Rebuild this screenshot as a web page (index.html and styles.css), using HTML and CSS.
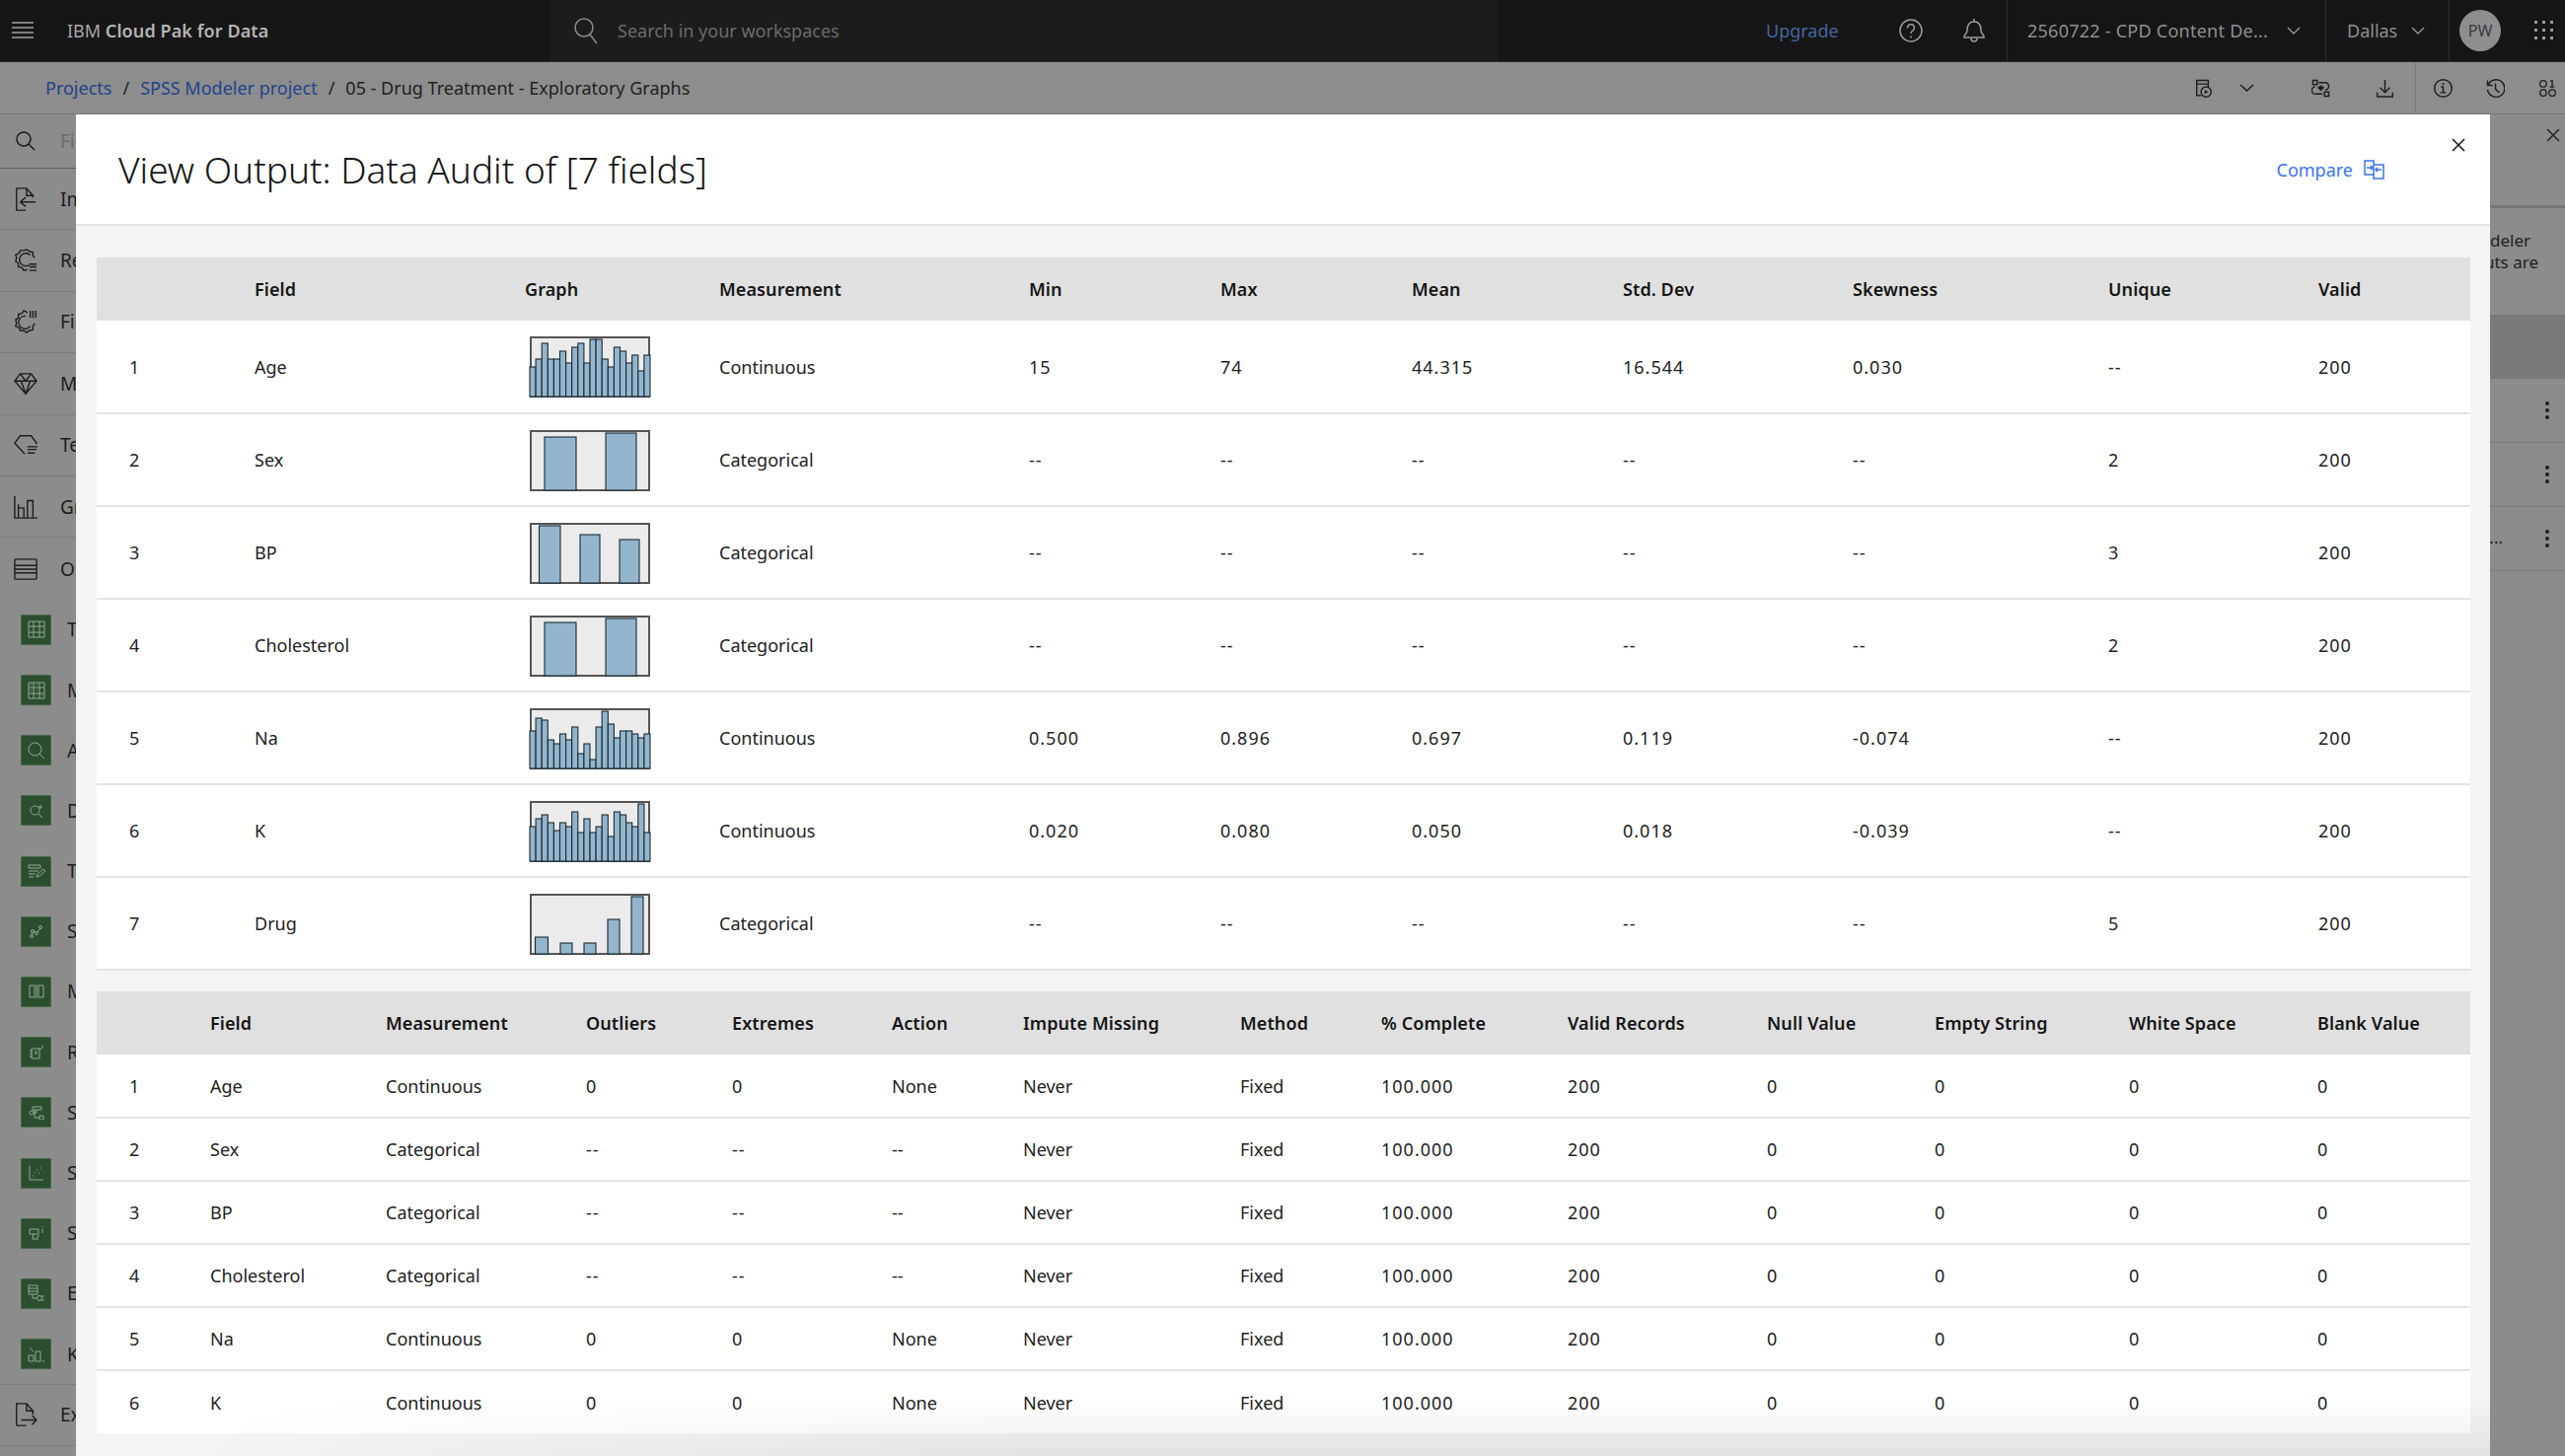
FILE: index.html
```html
<!DOCTYPE html>
<html lang="en">

<head>
    <meta charset="UTF-8">
    <title>View Output: Data Audit</title>
    <link rel="stylesheet" href="styles.css">
</head>

<body>
    <header class="topbar">
        <svg class="hamburger" width="22" height="18" viewBox="0 0 22 18"><path d="M0 1h22M0 6h22M0 11h22M0 16h22"/></svg>
        <div class="brand">IBM <b>Cloud Pak for Data</b></div>
        <div class="search">
            <svg width="24" height="28" viewBox="0 0 24 28"><circle cx="10" cy="11" r="9"/><path d="M16 18l7 9"/></svg>
            <span>Search in your workspaces</span>
        </div>
        <a class="upgrade">Upgrade</a>
        <svg class="tb-help" width="24" height="24" viewBox="0 0 24 24"><circle cx="12" cy="12" r="11"/><path d="M8.500 9.500c0-5 7-5 7 0 0 2.500-3.500 2.500-3.500 5.500"/><circle class="solid" cx="12" cy="18.500" r="1"/></svg>
        <svg class="tb-bell" width="24" height="26" viewBox="0 0 24 26"><path d="M12 1v3M5 13c0-5 2-9 7-9s7 4 7 9c0 3 3 4 3 6v1H2v-1c0-2 3-3 3-6zM9 21a3 3 0 0 0 6 0"/></svg>
        <div class="tb-menu account">2560722 - CPD Content De...
            <svg width="14" height="8" viewBox="0 0 14 8"><path d="M1 1l6 6 6-6"/></svg>
        </div>
        <div class="tb-menu region">Dallas
            <svg width="14" height="8" viewBox="0 0 14 8"><path d="M1 1l6 6 6-6"/></svg>
        </div>
        <div class="tb-user">
            <div class="avatar">PW</div>
            <svg class="apps" width="20" height="20" viewBox="0 0 20 20"><path d="M1 0h3v3H1zM9 0h3v3H9zM17 0h3v3h-3zM1 8h3v3H1zM9 8h3v3H9zM17 8h3v3h-3zM1 16h3v3H1zM9 16h3v3H9zM17 16h3v3h-3z"/></svg>
        </div>
    </header>

    <div class="crumbbar">
        <nav class="crumbs">
            <a>Projects</a><i>/</i><a>SPSS Modeler project</a><i>/</i><span>05 - Drug Treatment - Exploratory Graphs</span>
        </nav>
        <div class="tools">
            <svg class="t-run" width="18" height="19" viewBox="0 0 24 26"><path d="M8 23H2V2h16v9M2 7h16"/><circle cx="15" cy="18" r="7"/><path class="solid" d="M13 15l5 3-5 3z"/></svg>
            <svg class="t-chev" width="15" height="8" viewBox="0 0 15 8"><path d="M1 1l6.500 6L14 1"/></svg>
            <svg class="t-flow" width="19" height="19" viewBox="0 0 26 26"><path d="M2 2h6v6H2zM18 18h6v6h-6zM10 5h9a5 5 0 0 1 0 10M15 21H6a5 5 0 0 1-1-10"/><path class="solid" d="M8 12l5-3 5 3-5 5z"/></svg>
            <svg class="t-down" width="17" height="19" viewBox="0 0 24 26"><path d="M12 1v18M5 12l7 7 7-7M1 19v6h22v-6"/></svg>
            <span class="tool-sep"></span>
            <svg class="t-info" width="19" height="19" viewBox="0 0 26 26"><circle cx="13" cy="13" r="12"/><path d="M10 11h3v8M9 19h8"/><circle class="solid" cx="13" cy="7" r="1.500"/></svg>
            <svg class="t-hist" width="19" height="19" viewBox="0 0 26 26"><path d="M2 2v7h7M3 8a12 12 0 1 1-1 7M13 6v8l5 5"/></svg>
            <svg class="t-bits" width="19" height="17" viewBox="0 0 26 26"><circle cx="6" cy="6" r="5"/><circle cx="6" cy="20" r="5"/><circle cx="20" cy="20" r="5"/><path d="M17 2l3-1v10M16 11h7"/></svg>
        </div>
    </div>

    <div class="workspace">
        <aside class="palette">
            <div class="palette-search">
                <svg width="20" height="20" viewBox="0 0 20 20"><circle cx="8" cy="8" r="7"/><path d="M13 13l6 6"/></svg>
                <span>Find nodes</span>
            </div>
            <div class="pal-item">
                <svg viewBox="0 0 26 26"><path d="M13 25H3V1h11l7 8h-7V1M21 9v2M7 16h17M7 16l6-5M7 16l6 5"/></svg>
                <span>Import</span>
            </div>
            <div class="pal-item">
                <svg viewBox="0 0 26 26"><path d="M15 23l-4 1-2-3-4-1v-4l-3-2 1-4-1-3 4-2 1-3h4l3-1 3 2 4 1v4l2 2M17 18a7 7 0 1 1 1-11"/><path d="M17 17h8M17 20h8M17 24h8"/></svg>
                <span>Record Operations</span>
            </div>
            <div class="pal-item">
                <svg viewBox="0 0 26 26"><path d="M15 3l-4-2-2 3-4 1v4L2 11l1 4-1 3 4 2 1 3h4l3 2 3-2 4-1v-4l2-3M13 7a7 7 0 1 0 5 11M18 1v8M21 1v8M24 1v8"/></svg>
                <span>Field Operations</span>
            </div>
            <div class="pal-item">
                <svg viewBox="0 0 26 24"><path d="M7 1h12l6 8-12 14L1 9zM1 9h24M7 1l6 8 6-8M8 9l5 14 5-14"/></svg>
                <span>Modeling</span>
            </div>
            <div class="pal-item">
                <svg viewBox="0 0 26 22"><path d="M12 21L1 9l6-8h12l6 8-1 1"/><path d="M15 13h11M15 16h10M15 20h8"/></svg>
                <span>Text Analytics</span>
            </div>
            <div class="pal-item">
                <svg viewBox="0 0 26 26"><path d="M1 1v24h25M5 25V10M5 25h6V14h-6M15 25V6h6v19"/></svg>
                <span>Graphs</span>
            </div>
            <div class="pal-item pal-open">
                <svg viewBox="0 0 26 24"><path d="M2 1h22a1 1 0 0 1 1 1v20a1 1 0 0 1-1 1H2a1 1 0 0 1-1-1V2a1 1 0 0 1 1-1zM1 8h24M1 12h24M1 16h24"/></svg>
                <span>Outputs</span>
            </div>
            <div class="pal-sub"><b><svg width="18" height="18" viewBox="0 0 18 18"><path d="M1 1h16v16H1zM1 6h16M1 12h16M6 1v16M12 1v16"/></svg></b><span>Table</span></div>
            <div class="pal-sub"><b><svg width="18" height="18" viewBox="0 0 18 18"><path d="M1 1h16v16H1zM1 6h16M1 12h16M6 1v16M12 1v16M3 3h1M9 3h1M3 9h1M9 9h1M14 14h1"/></svg></b><span>Matrix</span></div>
            <div class="pal-sub"><b><svg width="18" height="18" viewBox="0 0 18 18"><circle cx="7.500" cy="7.500" r="6.500"/><path d="M12 12l5 5"/></svg></b><span>Analysis</span></div>
            <div class="pal-sub"><b><svg width="14" height="14" viewBox="0 0 14 14"><circle cx="5.500" cy="6.500" r="4.500"/><path d="M9 10l4 4M11 1v4M9 3h4"/></svg></b><span>Data Audit</span></div>
            <div class="pal-sub"><b><svg width="18" height="14" viewBox="0 0 18 14"><path d="M1 1h12v3H1zM1 7h10M1 10h7M1 13h5M9 13l1-3 6-5 2 2-6 5z"/></svg></b><span>Transform</span></div>
            <div class="pal-sub"><b><svg width="14" height="14" viewBox="0 0 14 14"><circle cx="2" cy="12" r="1.500"/><circle cx="3" cy="7" r="1.500"/><circle cx="7" cy="9" r="1.500"/><circle cx="11" cy="3" r="1.500"/><path d="M3 8l-1 3M4 7l2 1M8 8l3-4"/></svg></b><span>Statistics</span></div>
            <div class="pal-sub"><b><svg width="16" height="14" viewBox="0 0 16 14"><path d="M1 1h5v12H1zM10 1h5v12h-5zM8 0v14"/></svg></b><span>Means</span></div>
            <div class="pal-sub"><b><svg width="14" height="14" viewBox="0 0 14 14"><path d="M2 3h8v10H2zM0 5h3M0 8h3M0 11h3M5 6h3M5 8h3M9 3l2 1 3-4"/></svg></b><span>Report</span></div>
            <div class="pal-sub"><b><svg width="16" height="14" viewBox="0 0 16 14"><path d="M4 1h9v3H4zM6 4v8h5M8 4v3"/><circle cx="3" cy="7" r="2"/><path d="M5 7h3M11 10h4v4h-4z"/></svg></b><span>Set Globals</span></div>
            <div class="pal-sub"><b><svg width="16" height="16" viewBox="0 0 16 16"><path d="M1 1v14h14M6 8h1M10 8h1M8 5h1M12 3h1M4 11h1"/></svg></b><span>Sim Fit</span></div>
            <div class="pal-sub"><b><svg width="16" height="14" viewBox="0 0 16 14"><path d="M1 3h9v5H1zM5 8l-1 5h6M8 12l3-3M14 0v1M14 3v4"/></svg></b><span>Sim Eval</span></div>
            <div class="pal-sub"><b><svg width="18" height="18" viewBox="0 0 18 18"><path d="M1 1h9v9H1zM1 4h9M1 7h9M5 10v4h5"/><circle cx="12" cy="14" r="2.500"/><path d="M14 12h3M14 16h3"/></svg></b><span>Extension</span></div>
            <div class="pal-sub"><b><svg width="18" height="16" viewBox="0 0 18 16"><path d="M2 1l4 4M1 9h5v6H1zM8 5h5v10H8zM15 15h2"/></svg></b><span>KDE</span></div>
            <div class="pal-item pal-export">
                <svg viewBox="0 0 26 26"><path d="M3 25V1h11l7 8h-7V1M21 9v4M14 25H3M8 19h17M25 19l-5-5M25 19l-5 5"/></svg>
                <span>Export</span>
            </div>
        </aside>

        <main class="canvas"></main>

        <aside class="side-panel">
            <div class="side-head">
                <svg width="14" height="14" viewBox="0 0 14 14"><path d="M1 1l12 12M13 1L1 13"/></svg>
            </div>
            <div class="side-note">
                <p class="note-a">SPSS Modeler</p>
                <p class="note-b">node outputs are</p>
            </div>
            <div class="side-band"></div>
            <div class="side-row"><em></em></div>
            <div class="side-row"><em></em></div>
            <div class="side-row"><span>Drug...</span><em></em></div>
        </aside>
    </div>

    <section class="modal">
        <div class="modal-head">
            <h2>View Output: Data Audit of [7 fields]</h2>
            <a class="compare">Compare
                <svg width="21" height="20" viewBox="0 0 21 20"><path d="M10 15H1V1h9v18h10V5H10M3 8h6M7 6l2 2-2 2M18 10h-6M14 8l-2 2 2 2"/></svg>
            </a>
            <svg class="modal-close" width="14" height="14" viewBox="0 0 14 14"><path d="M1 1l12 12M13 1L1 13"/></svg>
        </div>
        <div class="modal-body">
            <table class="audit stats">
                <colgroup><col><col><col><col><col><col><col><col><col><col><col></colgroup>
                <thead>
                    <tr><th></th><th>Field</th><th>Graph</th><th>Measurement</th><th>Min</th><th>Max</th><th>Mean</th><th>Std. Dev</th><th>Skewness</th><th>Unique</th><th>Valid</th></tr>
                </thead>
                <tbody>
                    <tr><td>1</td><td>Age</td><td>
                        <svg class="graph" width="122" height="61" viewBox="0 0 122 61"><rect class="frame" x="1" y="1" width="120" height="60"/>
                            <rect x="0" y="31" width="6.100" height="30"/><rect x="6.100" y="23" width="6.100" height="38"/><rect x="12.200" y="7" width="6.100" height="54"/><rect x="18.300" y="23" width="6.100" height="38"/><rect x="24.400" y="23" width="6.100" height="38"/><rect x="30.500" y="15" width="6.100" height="46"/><rect x="36.600" y="27" width="6.100" height="34"/><rect x="42.700" y="11" width="6.100" height="50"/><rect x="48.800" y="7" width="6.100" height="54"/><rect x="54.900" y="27" width="6.100" height="34"/><rect x="61" y="3" width="6.100" height="58"/><rect x="67.100" y="3" width="6.100" height="58"/><rect x="73.200" y="23" width="6.100" height="38"/><rect x="79.300" y="31" width="6.100" height="30"/><rect x="85.400" y="11" width="6.100" height="50"/><rect x="91.500" y="15" width="6.100" height="46"/><rect x="97.600" y="27" width="6.100" height="34"/><rect x="103.700" y="19" width="6.100" height="42"/><rect x="109.800" y="35" width="6.100" height="26"/><rect x="115.900" y="19" width="6.100" height="42"/>
                        </svg></td><td>Continuous</td><td>15</td><td>74</td><td>44.315</td><td>16.544</td><td>0.030</td><td>--</td><td>200</td></tr>
                    <tr><td>2</td><td>Sex</td><td>
                        <svg class="graph" width="122" height="61" viewBox="0 0 122 61"><rect class="frame" x="1" y="1" width="120" height="60"/>
                            <rect x="15" y="7" width="32" height="54"/><rect x="77" y="3" width="31" height="58"/>
                        </svg></td><td>Categorical</td><td>--</td><td>--</td><td>--</td><td>--</td><td>--</td><td>2</td><td>200</td></tr>
                    <tr><td>3</td><td>BP</td><td>
                        <svg class="graph" width="122" height="61" viewBox="0 0 122 61"><rect class="frame" x="1" y="1" width="120" height="60"/>
                            <rect x="9.500" y="3" width="21.500" height="58"/><rect x="51" y="12" width="20" height="49"/><rect x="91" y="17" width="20" height="44"/>
                        </svg></td><td>Categorical</td><td>--</td><td>--</td><td>--</td><td>--</td><td>--</td><td>3</td><td>200</td></tr>
                    <tr><td>4</td><td>Cholesterol</td><td>
                        <svg class="graph" width="122" height="61" viewBox="0 0 122 61"><rect class="frame" x="1" y="1" width="120" height="60"/>
                            <rect x="15" y="7" width="32" height="54"/><rect x="77" y="3" width="31" height="58"/>
                        </svg></td><td>Categorical</td><td>--</td><td>--</td><td>--</td><td>--</td><td>--</td><td>2</td><td>200</td></tr>
                    <tr><td>5</td><td>Na</td><td>
                        <svg class="graph" width="122" height="61" viewBox="0 0 122 61"><rect class="frame" x="1" y="1" width="120" height="60"/>
                            <rect x="0" y="23" width="6.100" height="38"/><rect x="6.100" y="10" width="6.100" height="51"/><rect x="12.200" y="12" width="6.100" height="49"/><rect x="18.300" y="32" width="6.100" height="29"/><rect x="24.400" y="36" width="6.100" height="25"/><rect x="30.500" y="26" width="6.100" height="35"/><rect x="36.600" y="32" width="6.100" height="29"/><rect x="42.700" y="19" width="6.100" height="42"/><rect x="48.800" y="46" width="6.100" height="15"/><rect x="54.900" y="36" width="6.100" height="25"/><rect x="61" y="52" width="6.100" height="9"/><rect x="67.100" y="19" width="6.100" height="42"/><rect x="73.200" y="3" width="6.100" height="58"/><rect x="79.300" y="16" width="6.100" height="45"/><rect x="85.400" y="30" width="6.100" height="31"/><rect x="91.500" y="23" width="6.100" height="38"/><rect x="97.600" y="23" width="6.100" height="38"/><rect x="103.700" y="26" width="6.100" height="35"/><rect x="109.800" y="30" width="6.100" height="31"/><rect x="115.900" y="26" width="6.100" height="35"/>
                        </svg></td><td>Continuous</td><td>0.500</td><td>0.896</td><td>0.697</td><td>0.119</td><td>-0.074</td><td>--</td><td>200</td></tr>
                    <tr><td>6</td><td>K</td><td>
                        <svg class="graph" width="122" height="61" viewBox="0 0 122 61"><rect class="frame" x="1" y="1" width="120" height="60"/>
                            <rect x="0" y="26" width="6.100" height="35"/><rect x="6.100" y="18" width="6.100" height="43"/><rect x="12.200" y="14" width="6.100" height="47"/><rect x="18.300" y="22" width="6.100" height="39"/><rect x="24.400" y="30" width="6.100" height="31"/><rect x="30.500" y="22" width="6.100" height="39"/><rect x="36.600" y="26" width="6.100" height="35"/><rect x="42.700" y="11" width="6.100" height="50"/><rect x="48.800" y="32" width="6.100" height="29"/><rect x="54.900" y="18" width="6.100" height="43"/><rect x="61" y="32" width="6.100" height="29"/><rect x="67.100" y="26" width="6.100" height="35"/><rect x="73.200" y="14" width="6.100" height="47"/><rect x="79.300" y="36" width="6.100" height="25"/><rect x="85.400" y="11" width="6.100" height="50"/><rect x="91.500" y="14" width="6.100" height="47"/><rect x="97.600" y="22" width="6.100" height="39"/><rect x="103.700" y="26" width="6.100" height="35"/><rect x="109.800" y="3" width="6.100" height="58"/><rect x="115.900" y="32" width="6.100" height="29"/>
                        </svg></td><td>Continuous</td><td>0.020</td><td>0.080</td><td>0.050</td><td>0.018</td><td>-0.039</td><td>--</td><td>200</td></tr>
                    <tr><td>7</td><td>Drug</td><td>
                        <svg class="graph" width="122" height="61" viewBox="0 0 122 61"><rect class="frame" x="1" y="1" width="120" height="60"/>
                            <rect x="5.500" y="44" width="13" height="17"/><rect x="31" y="50" width="12" height="11"/><rect x="55" y="50" width="12" height="11"/><rect x="79" y="26" width="12" height="35"/><rect x="103" y="3" width="12" height="58"/>
                        </svg></td><td>Categorical</td><td>--</td><td>--</td><td>--</td><td>--</td><td>--</td><td>5</td><td>200</td></tr>
                </tbody>
            </table>

            <table class="audit quality">
                <colgroup><col><col><col><col><col><col><col><col><col><col><col><col><col><col></colgroup>
                <thead>
                    <tr><th></th><th>Field</th><th>Measurement</th><th>Outliers</th><th>Extremes</th><th>Action</th><th>Impute Missing</th><th>Method</th><th>% Complete</th><th>Valid Records</th><th>Null Value</th><th>Empty String</th><th>White Space</th><th>Blank Value</th></tr>
                </thead>
                <tbody>
                    <tr><td>1</td><td>Age</td><td>Continuous</td><td>0</td><td>0</td><td>None</td><td>Never</td><td>Fixed</td><td>100.000</td><td>200</td><td>0</td><td>0</td><td>0</td><td>0</td></tr>
                    <tr><td>2</td><td>Sex</td><td>Categorical</td><td>--</td><td>--</td><td>--</td><td>Never</td><td>Fixed</td><td>100.000</td><td>200</td><td>0</td><td>0</td><td>0</td><td>0</td></tr>
                    <tr><td>3</td><td>BP</td><td>Categorical</td><td>--</td><td>--</td><td>--</td><td>Never</td><td>Fixed</td><td>100.000</td><td>200</td><td>0</td><td>0</td><td>0</td><td>0</td></tr>
                    <tr><td>4</td><td>Cholesterol</td><td>Categorical</td><td>--</td><td>--</td><td>--</td><td>Never</td><td>Fixed</td><td>100.000</td><td>200</td><td>0</td><td>0</td><td>0</td><td>0</td></tr>
                    <tr><td>5</td><td>Na</td><td>Continuous</td><td>0</td><td>0</td><td>None</td><td>Never</td><td>Fixed</td><td>100.000</td><td>200</td><td>0</td><td>0</td><td>0</td><td>0</td></tr>
                    <tr><td>6</td><td>K</td><td>Continuous</td><td>0</td><td>0</td><td>None</td><td>Never</td><td>Fixed</td><td>100.000</td><td>200</td><td>0</td><td>0</td><td>0</td><td>0</td></tr>
                </tbody>
            </table>
        </div>
        <div class="modal-fade"></div>
    </section>
</body>

</html>
```

FILE: styles.css
```css
* {
    margin: 0;
    padding: 0;
    box-sizing: border-box;
}

html,
body {
    height: 100%;
    overflow: hidden;
}

body {
    position: relative;
    display: flex;
    flex-direction: column;
    background-color: #8c8c8c;
    color: #1f1f1f;
    font-family: "Noto Sans", "Liberation Sans", sans-serif;
    font-size: 18px;
}

svg {
    display: block;
    flex: none;
    fill: none;
    stroke: currentColor;
    stroke-width: 1.5;
}

svg .solid {
    fill: currentColor;
    stroke: none;
}

/* top bar */
.topbar {
    display: flex;
    align-items: center;
    height: 63px;
    flex: none;
    background-color: #161616;
    border-bottom: 1px solid #2c2c2c;
    color: #9c9c9c;
}

.hamburger {
    margin-left: 12px;
    color: #a0a0a0;
}

.brand {
    width: 524px;
    padding-left: 34px;
    color: #a8a8a8;
    font-size: 18px;
}

.brand b {
    color: #b4b4b4;
    font-weight: 600;
    letter-spacing: 0.1px;
}

.search {
    display: flex;
    align-items: center;
    gap: 20px;
    width: 960px;
    height: 62px;
    padding-left: 24px;
    background-color: #1c1c1c;
    color: #6b6b6b;
}

.search svg {
    color: #8a8a8a;
}

.upgrade {
    margin-left: 272px;
    width: 130px;
    color: #46659b;
}

.tb-help {
    margin-left: 5px;
}

.tb-bell {
    margin-left: 40px;
}

.tb-menu {
    display: flex;
    align-items: center;
    height: 62px;
    border-left: 1px solid #2c2c2c;
    color: #8f8f8f;
}

.account {
    margin-left: 21px;
    width: 323px;
    padding-left: 20px;
    gap: 19px;
    letter-spacing: 0.25px;
}

.region {
    width: 125px;
    padding-left: 21px;
    gap: 14px;
}

.tb-user {
    display: flex;
    align-items: center;
    height: 62px;
    border-left: 1px solid #2c2c2c;
    padding-left: 10px;
    gap: 33px;
}

.avatar {
    display: flex;
    align-items: center;
    justify-content: center;
    width: 42px;
    height: 42px;
    border-radius: 50%;
    background-color: #8e8e8e;
    color: #3c3c3c;
    font-size: 16px;
}

.apps {
    fill: #9a9a9a;
    stroke: none;
}

/* breadcrumb row */
.crumbbar {
    display: flex;
    align-items: center;
    justify-content: space-between;
    height: 53px;
    flex: none;
    border-bottom: 1px solid #777;
    background-color: #8d8d8d;
}

.crumbs {
    padding-left: 46px;
    font-size: 18px;
}

.crumbs a {
    color: #23438c;
}

.crumbs i {
    margin: 0 11px;
    font-style: normal;
}

.tools {
    width: 390px;
    height: 52px;
    display: flex;
    align-items: center;
    color: #1e1e1e;
}

.tools svg {
    stroke-width: 2;
}

.tools .t-chev {
    margin-left: 27px;
    stroke-width: 1.5;
}

.t-run {
    margin-left: 15px;
}

.t-flow {
    margin-left: 58px;
}

.t-down {
    margin-left: 47px;
}

.tool-sep {
    align-self: stretch;
    width: 1px;
    margin-left: 22px;
    background-color: #7a7a7a;
}

.t-info {
    margin-left: 18px;
}

.t-hist {
    margin-left: 34px;
}

.t-bits {
    margin-left: 34px;
}

/* area behind the dialog */
.workspace {
    display: flex;
    flex: 1;
    min-height: 0;
}

.palette {
    width: 240px;
    flex: none;
    color: #1c1c1c;
    font-size: 19px;
    white-space: nowrap;
}

.palette-search {
    display: flex;
    align-items: center;
    height: 55px;
    padding-left: 16px;
    gap: 25px;
    border-bottom: 1px solid #5e5e5e;
}

.palette-search span {
    color: #6a6a6a;
}

.pal-item {
    display: flex;
    align-items: center;
    height: 62.400px;
    padding-left: 14px;
    gap: 23px;
    border-bottom: 1px solid #7c7c7c;
}

.pal-item svg {
    width: 24px;
    height: 24px;
}

.pal-open {
    border-bottom: 0;
}

.pal-export {
    border-top: 1px solid #7c7c7c;
}

.pal-sub {
    display: flex;
    align-items: center;
    height: 61.200px;
    padding-left: 21px;
    gap: 16px;
}

.pal-sub b {
    display: flex;
    flex: none;
    align-items: center;
    justify-content: center;
    width: 31px;
    height: 31px;
    border: 1px solid #47664a;
    border-radius: 1px;
    background-color: #2b4f2e;
    color: #95a795;
    font-weight: 400;
}

.pal-sub svg {
    stroke-width: 1;
}

.canvas {
    flex: 1;
}

.side-panel {
    width: 76px;
    flex: none;
    font-size: 17px;
    line-height: 22px;
    white-space: nowrap;
}

.side-head {
    display: flex;
    justify-content: flex-end;
    height: 95px;
    padding: 14px 5px 0 0;
    border-bottom: 3px solid #757575;
    color: #242424;
}

.side-note {
    height: 108px;
    padding-top: 22px;
}

.side-note p {
    display: flex;
    justify-content: flex-end;
}

.note-a {
    padding-right: 35px;
}

.note-b {
    padding-right: 27px;
}

.side-band {
    height: 65px;
    background-color: #7a7a7a;
}

.side-row {
    position: relative;
    display: flex;
    justify-content: flex-end;
    height: 65px;
    padding: 20px 63px 0 0;
    border-bottom: 1px solid #7c7c7c;
}

.side-row em {
    position: absolute;
    top: 30px;
    right: 16px;
    width: 4px;
    height: 4px;
    border-radius: 50%;
    background-color: #1f1f1f;
    box-shadow: 0 -7px 0 #1f1f1f, 0 7px 0 #1f1f1f;
}

/* dialog */
.modal {
    position: absolute;
    top: 116px;
    left: 77px;
    right: 76px;
    bottom: 0;
    overflow: hidden;
    background-color: #f4f4f4;
}

.modal-head {
    position: relative;
    display: flex;
    align-items: center;
    justify-content: space-between;
    height: 113px;
    padding: 0 107px 0 43px;
    background-color: #fff;
    border-bottom: 2px solid #e4e4e4;
}

.modal-head h2 {
    font-size: 37px;
    font-weight: 300;
    color: #161616;
}

.compare {
    display: flex;
    align-items: center;
    gap: 11px;
    color: #3a74f0;
    font-size: 18px;
}

.modal-close {
    position: absolute;
    top: 24px;
    right: 25px;
    color: #161616;
}

.modal-body {
    padding: 32px 20px 0 21px;
}

.audit {
    width: 2406px;
    table-layout: fixed;
    border-collapse: collapse;
    background-color: #fff;
    text-align: left;
}

.audit th {
    height: 64px;
    background-color: #e0e0e0;
    color: #161616;
    font-weight: 600;
    letter-spacing: 0.1px;
}

.audit td {
    border-bottom: 2px solid #e4e4e4;
    color: #222;
}

.quality tr:last-child td {
    border-bottom: 0;
}

.audit th:first-child,
.audit td:first-child {
    padding-left: 33px;
}

.stats td {
    height: 94px;
}

.stats td:nth-child(n+5) {
    letter-spacing: 1px;
}

.quality {
    margin-top: 21px;
}

.quality td {
    height: 64px;
}

.quality td:nth-child(4),
.quality td:nth-child(5),
.quality td:nth-child(n+9) {
    letter-spacing: 1px;
}

.stats col:nth-child(1) { width: 160px; }
.stats col:nth-child(2) { width: 274px; }
.stats col:nth-child(3) { width: 197px; }
.stats col:nth-child(4) { width: 314px; }
.stats col:nth-child(5) { width: 194px; }
.stats col:nth-child(6) { width: 194px; }
.stats col:nth-child(7) { width: 214px; }
.stats col:nth-child(8) { width: 233px; }
.stats col:nth-child(9) { width: 259px; }
.stats col:nth-child(10) { width: 213px; }
.stats col:nth-child(11) { width: 154px; }

.quality col:nth-child(1) { width: 115px; }
.quality col:nth-child(2) { width: 178px; }
.quality col:nth-child(3) { width: 203px; }
.quality col:nth-child(4) { width: 148px; }
.quality col:nth-child(5) { width: 162px; }
.quality col:nth-child(6) { width: 133px; }
.quality col:nth-child(7) { width: 220px; }
.quality col:nth-child(8) { width: 143px; }
.quality col:nth-child(9) { width: 189px; }
.quality col:nth-child(10) { width: 202px; }
.quality col:nth-child(11) { width: 170px; }
.quality col:nth-child(12) { width: 197px; }
.quality col:nth-child(13) { width: 191px; }
.quality col:nth-child(14) { width: 155px; }

.graph {
    margin-left: 5px;
    overflow: visible;
    fill: #93b5cd;
    stroke: #1b2a33;
    stroke-width: 1.100;
}

.graph .frame {
    fill: #ebebeb;
    stroke: #555;
    stroke-width: 2;
}

.modal-fade {
    position: absolute;
    left: 0;
    right: 0;
    bottom: 0;
    height: 60px;
    background-image: linear-gradient(to bottom, rgba(0, 0, 0, 0), rgba(0, 0, 0, 0.07));
    -webkit-mask-image: linear-gradient(to right, transparent 5%, #000 40%);
    mask-image: linear-gradient(to right, transparent 5%, #000 40%);
}
```
